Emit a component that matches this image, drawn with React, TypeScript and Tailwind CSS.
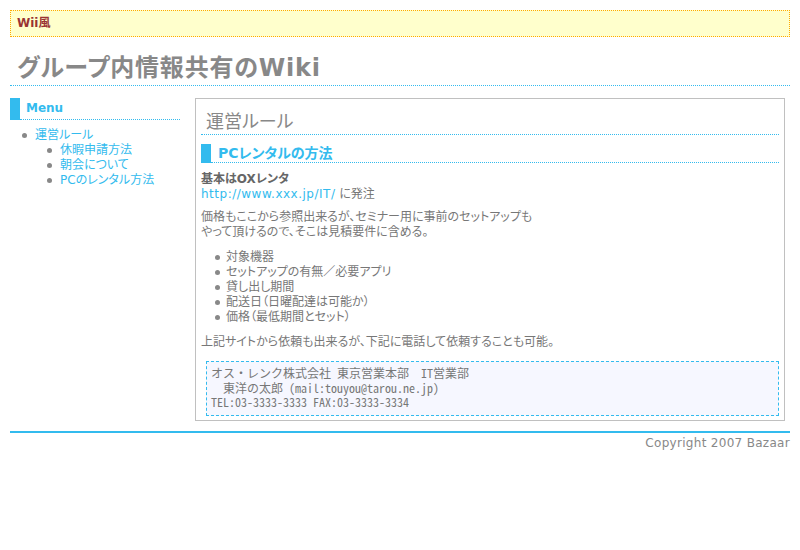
const body = "font-['DejaVu_Sans','Noto_Sans_CJK_JP',sans-serif] [font-feature-settings:'palt']";

const subMenu = ["休暇申請方法", "朝会について", "PCのレンタル方法"];
const items = ["対象機器", "セットアップの有無／必要アプリ", "貸し出し期間", "配送日（日曜配達は可能か）", "価格（最低期間とセット）"];

function Item({ children, gap = "mr-[6px]" }: { children: React.ReactNode; gap?: string }) {
  return (
    <li className="flex items-center">
      <span className={`w-[5px] h-[5px] rounded-full bg-[#888] shrink-0 ${gap}`} />
      <span>{children}</span>
    </li>
  );
}

export default function App() {
  return (
    <div className={`${body} w-[800px] h-[550px] bg-white px-[10px] pt-[10px] text-[12px] leading-[15px] text-[#777]`}>
      <div className="h-[27px] border border-dotted border-[#ffaa00] bg-[#ffffcc] pl-[6px] flex items-center">
        <span className="font-bold text-[#993333] text-[12px]">Wii風</span>
      </div>

      <h1 className="mt-[18px] h-[31px] pl-[7px] border-b border-dotted border-[#33bbee] text-[24px] leading-[26px] tracking-[0.8px] font-bold text-[#888]">
        グループ内情報共有のWiki
      </h1>

      <div className="flex mt-[12px]">
        <div className="w-[170px] shrink-0">
          <div className="flex h-[22px]">
            <div className="w-[10px] bg-[#33bbee]" />
            <div className="flex-1 border-b border-dotted border-[#33bbee] pl-[6px] flex items-center">
              <span className="font-bold text-[#33bbee] text-[12px]">Menu</span>
            </div>
          </div>
          <ul className="mt-[8px] pl-[12px] text-[#33bbee]">
            <Item gap="mr-[8px]">運営ルール</Item>
            <li>
              <ul className="pl-[25px]">
                {subMenu.map((s) => (
                  <Item key={s} gap="mr-[8px]">{s}</Item>
                ))}
              </ul>
            </li>
          </ul>
        </div>

        <div className="ml-[15px] mr-[5px] flex-1 h-[323px] border border-[#c0c0c0] px-[5px] pt-[12px]">
          <h2 className="text-[18px] leading-[22px] pl-[5px] pb-[1px] border-b border-dotted border-[#33bbee] text-[#888]">
            運営ルール
          </h2>
          <div className="flex h-[19px] mt-[9px]">
            <div className="w-[10px] bg-[#33bbee]" />
            <div className="flex-1 border-b border-dotted border-[#33bbee] pl-[7px] flex items-center">
              <span className="font-bold text-[#33bbee] text-[14px]">PCレンタルの方法</span>
            </div>
          </div>

          <div className="mt-[9px]">
            <div className="font-bold text-[#666]">基本はOXレンタ</div>
            <div>
              <span className="text-[#33bbee] tracking-[0.5px]">http://www.xxx.jp/IT/</span> に発注
            </div>
          </div>

          <p className="mt-[8px]">
            価格もここから参照出来るが、セミナー用に事前のセットアップも
            <br />
            やって頂けるので、そこは見積要件に含める。
          </p>

          <ul className="mt-[10px] pl-[14px]">
            {items.map((s) => (
              <Item key={s}>{s}</Item>
            ))}
          </ul>

          <p className="mt-[10px]">上記サイトから依頼も出来るが、下記に電話して依頼することも可能。</p>

          <pre className="mt-[11px] ml-[5px] h-[55px] border border-dashed border-[#33bbee] bg-[#f6f7ff] px-[4px] pt-[4px] font-['Noto_Sans_Mono_CJK_JP','Liberation_Mono',monospace] text-[12px] leading-[14.5px] text-[#777]">
{`オス・レンク株式会社 東京営業本部　IT営業部
　東洋の太郎 (mail:touyou@tarou.ne.jp)
TEL:03-3333-3333 FAX:03-3333-3334`}
          </pre>
        </div>
      </div>

      <div className="mt-[10px] border-t-2 border-[#33bbee] pt-[3px] text-right text-[12px] tracking-[0.3px] text-[#888]">
        Copyright 2007 Bazaar
      </div>
    </div>
  );
}
